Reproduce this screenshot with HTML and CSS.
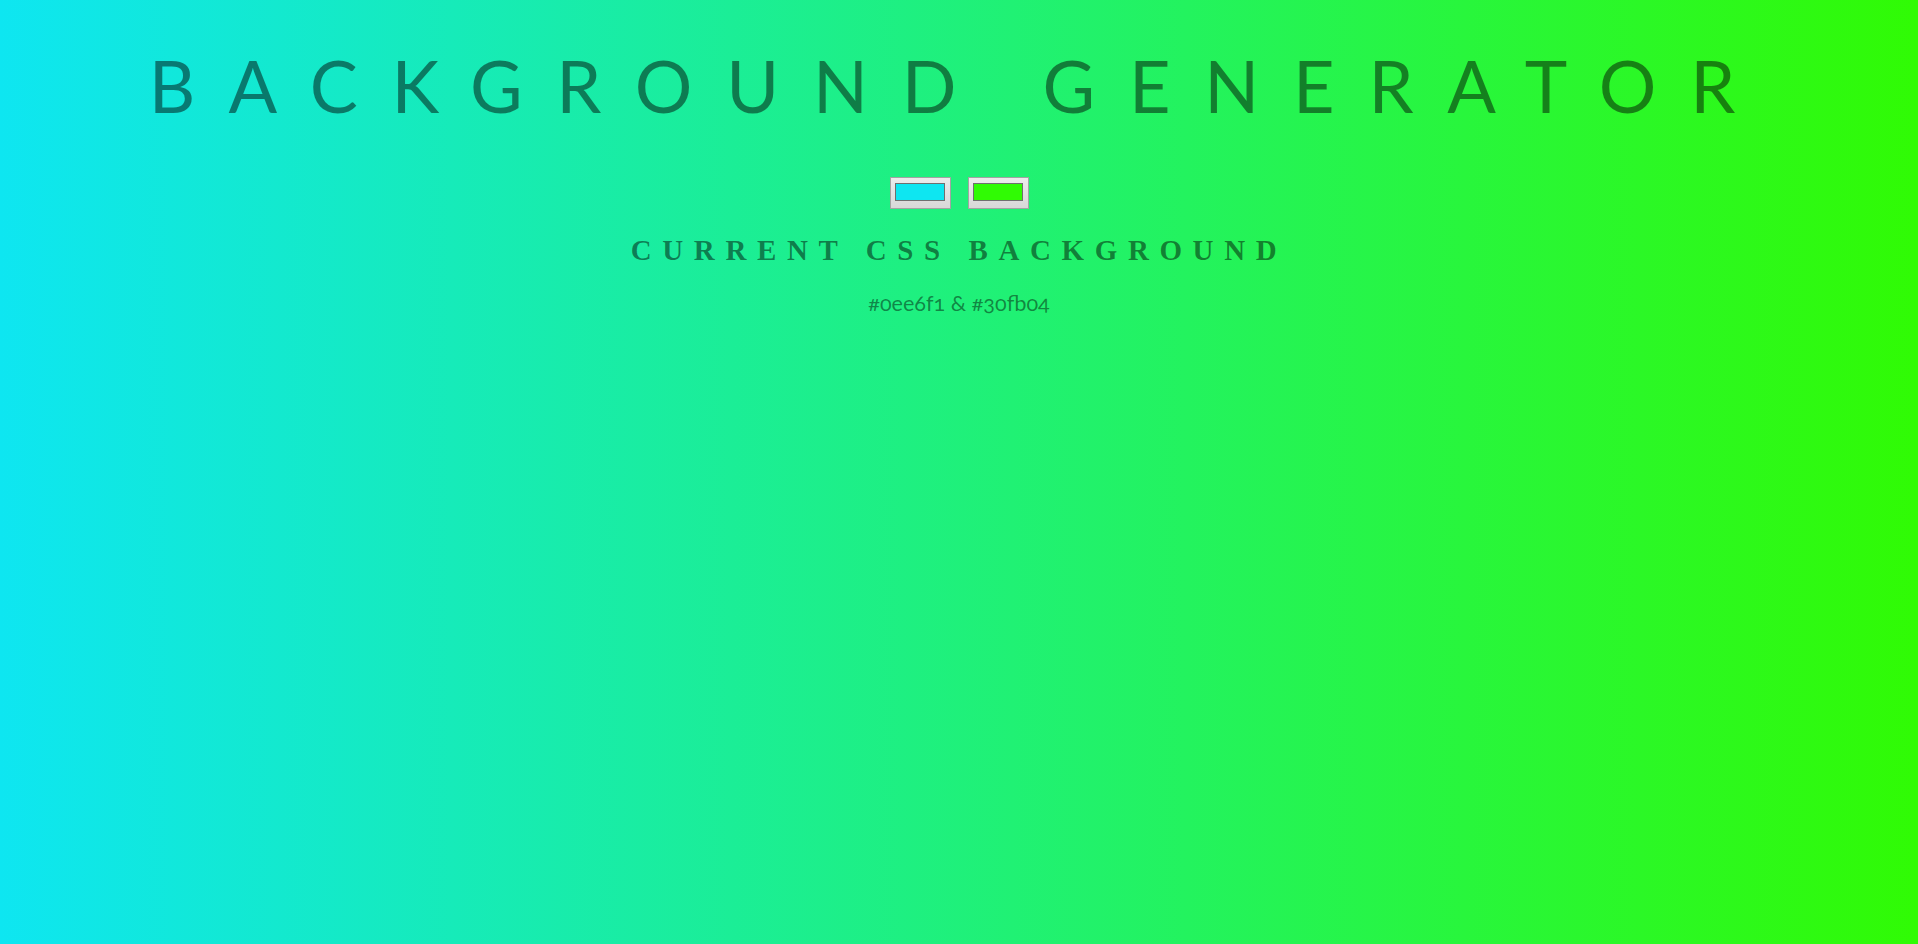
FILE: index.html
```html
<!DOCTYPE html>
<html lang="en">
<head>
<meta charset="utf-8">
<title>Background Generator</title>
<link rel="stylesheet" href="styles.css">
</head>
<body class="page">
  <main class="generator">
    <h1 class="title">Background Generator</h1>
    <div class="pickers">
      <input class="picker" type="color" name="color1" value="#0ee6f1">
      <input class="picker" type="color" name="color2" value="#30fb04">
    </div>
    <h3 class="subtitle">Current CSS Background</h3>
    <p class="value">#0ee6f1 &amp; #30fb04</p>
  </main>
</body>
</html>
```
FILE: styles.css
```css
html, body {
  margin: 0;
  padding: 0;
  height: 100%;
}

.page {
  background: linear-gradient(to right, #0ee6f1, #30fb04);
  font-family: Lato, "Noto Sans", sans-serif;
  color: rgba(0, 0, 0, 0.45);
  text-align: center;
  overflow: hidden;
}

.generator {
  display: flex;
  flex-direction: column;
  align-items: center;
}

.title {
  margin: 49px 0 0;
  font-family: Lato, sans-serif;
  font-weight: 400;
  font-size: 72px;
  line-height: 1;
  letter-spacing: 33.8px;
  text-transform: uppercase;
  color: rgba(0, 0, 0, 0.48);
}

.pickers {
  display: flex;
  gap: 17px;
  margin-top: 56px;
}

.picker {
  -webkit-appearance: none;
  appearance: none;
  box-sizing: border-box;
  width: 61px;
  height: 32px;
  margin: 0;
  padding: 0;
  border: 1px solid #a3a3a3;
  background: linear-gradient(#ececec, #d8d8d8);
  cursor: pointer;
}

.picker::-webkit-color-swatch-wrapper {
  padding: 5px 5px 7px 4px;
}

.picker::-webkit-color-swatch {
  border: 1px solid #6f6f6f;
  border-radius: 0;
}

.subtitle {
  margin: 27px 0 0;
  font-family: "Liberation Serif", "Times New Roman", serif;
  font-weight: 700;
  font-size: 29px;
  line-height: 1;
  letter-spacing: 10.6px;
  text-transform: uppercase;
  color: rgba(0, 0, 0, 0.48);
}

.value {
  margin: 28px 0 0;
  font-family: Lato, sans-serif;
  font-size: 21.6px;
  line-height: 1;
  font-variant-numeric: oldstyle-nums;
  color: rgba(0, 0, 0, 0.45);
}
```
